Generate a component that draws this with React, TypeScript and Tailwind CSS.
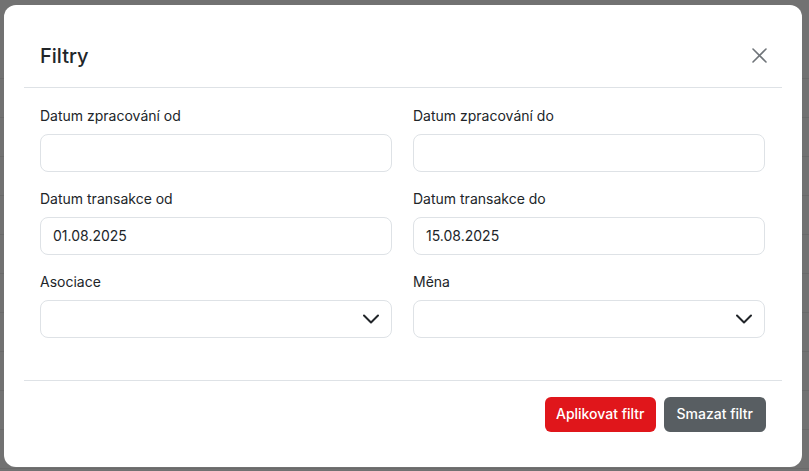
import type { ReactNode } from 'react'

function Chevron() {
  return (
    <svg width="16" height="16" viewBox="0 0 16 16" fill="none" className="shrink-0">
      <path d="M1 4.5l7 7 7-7" stroke="#212529" strokeWidth="2" strokeLinecap="round" strokeLinejoin="round" />
    </svg>
  )
}

function Field({ label, children }: { label: string; children: ReactNode }) {
  return (
    <div className="flex flex-col">
      <label className="text-sm leading-5 text-[#212529] mb-2">{label}</label>
      {children}
    </div>
  )
}

function TextInput({ value }: { value?: string }) {
  return (
    <div className="h-[38px] rounded-lg border border-[#dee2e6] bg-white px-3 flex items-center text-sm text-[#212529]">
      {value}
    </div>
  )
}

function SelectInput() {
  return (
    <div className="h-[38px] rounded-lg border border-[#dee2e6] bg-white pl-3 pr-[12px] flex items-center justify-end">
      <Chevron />
    </div>
  )
}

export default function App() {
  const rows = Array.from({ length: 12 })

  return (
    <div className="relative w-[809px] h-[471px] overflow-hidden bg-[#727272] font-['Inter',_'Liberation_Sans',_sans-serif]">
      {/* page behind the backdrop */}
      <div className="flex flex-col pt-[40px]">
        {rows.map((_, i) => (
          <div key={i} className="h-[39px] border-b border-[#6a6a6a]" />
        ))}
      </div>

      <div className="absolute inset-0 flex items-center pl-[4px]">
        <div className="w-[798px] h-[462px] bg-white rounded-xl flex flex-col px-5">
          <div className="flex items-center justify-between px-4 pt-[37px] pb-[17px] border-b border-[#dee2e6]">
            <h2 className="text-xl leading-7 font-medium text-[#212529]">Filtry</h2>
            <button className="w-4 h-4 flex items-center justify-center mr-[-1px]">
              <svg width="15" height="15" viewBox="0 0 15 15" fill="none">
                <path d="M1 1l13 13M14 1L1 14" stroke="#6f7479" strokeWidth="1.6" strokeLinecap="round" />
              </svg>
            </button>
          </div>

          <div className="grid grid-cols-2 gap-x-[21px] gap-y-[17px] pl-4 pr-[17px] pt-[18px] pb-[42px] border-b border-[#dee2e6]">
            <Field label="Datum zpracování od">
              <TextInput />
            </Field>
            <Field label="Datum zpracování do">
              <TextInput />
            </Field>
            <Field label="Datum transakce od">
              <TextInput value="01.08.2025" />
            </Field>
            <Field label="Datum transakce do">
              <TextInput value="15.08.2025" />
            </Field>
            <Field label="Asociace">
              <SelectInput />
            </Field>
            <Field label="Měna">
              <SelectInput />
            </Field>
          </div>

          <div className="flex justify-end gap-2 pt-4 pr-4">
            <button className="h-[35px] px-[11px] rounded-md bg-[#e0161b] text-white text-sm font-medium">
              Aplikovat filtr
            </button>
            <button className="h-[35px] px-[13px] rounded-md bg-[#585e62] text-white text-sm font-medium">
              Smazat filtr
            </button>
          </div>
        </div>
      </div>
    </div>
  )
}
